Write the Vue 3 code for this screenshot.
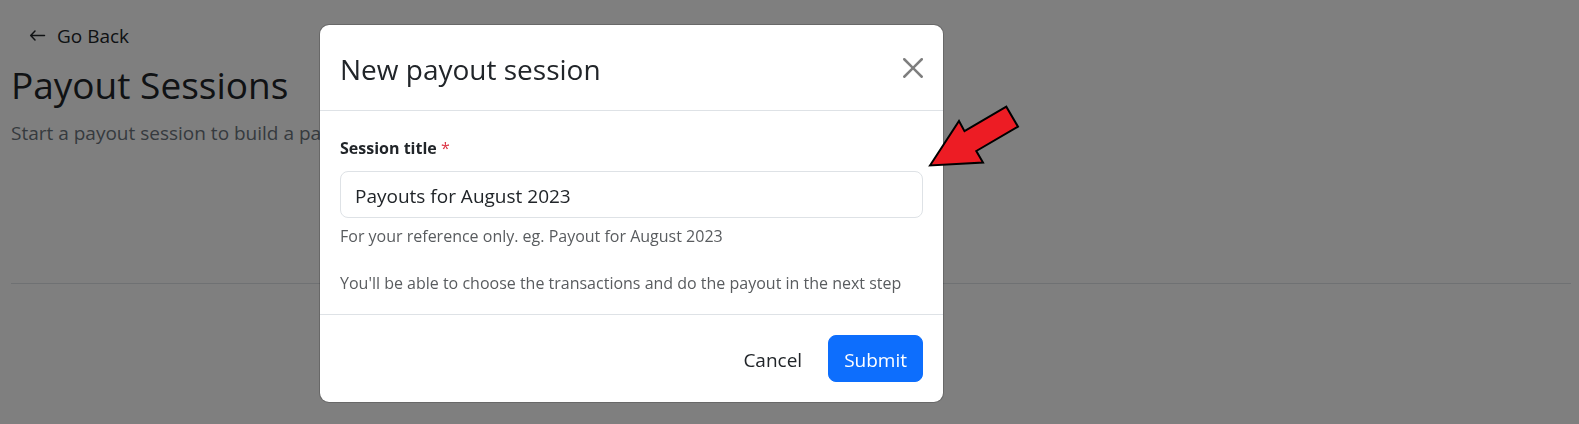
<script setup>
import { ref } from 'vue'

const sessionTitle = ref('Payouts for August 2023')
</script>

<template>
  <main class="page">
    <button type="button" class="back">
      <svg class="back-icon" viewBox="0 0 17 17" aria-hidden="true">
        <path d="M15.500 7.500H2M6 3 1.700 7.500 6 12" />
      </svg>
      Go Back
    </button>
    <h1 class="title">Payout Sessions</h1>
    <p class="lead">Start a payout session to build a payout</p>
    <hr class="rule">
  </main>

  <div class="backdrop">
    <form class="modal" role="dialog" aria-modal="true" aria-labelledby="modal-title" @submit.prevent>
      <header class="modal-header">
        <h2 id="modal-title" class="modal-title">New payout session</h2>
        <button type="button" class="close" aria-label="Close">
          <svg viewBox="0 0 16 16" aria-hidden="true">
            <path d="M.293.293a1 1 0 0 1 1.414 0L8 6.586 14.293.293a1 1 0 1 1 1.414 1.414L9.414 8l6.293 6.293a1 1 0 0 1-1.414 1.414L8 9.414l-6.293 6.293a1 1 0 0 1-1.414-1.414L6.586 8 .293 1.707a1 1 0 0 1 0-1.414z" />
          </svg>
        </button>
      </header>

      <div class="modal-body">
        <label class="label" for="session-title">Session title <span class="required">*</span></label>
        <input id="session-title" v-model="sessionTitle" class="input" type="text" required>
        <p class="help">For your reference only. eg. Payout for August 2023</p>
        <p class="help note">You'll be able to choose the transactions and do the payout in the next step</p>
      </div>

      <footer class="modal-footer">
        <button type="button" class="button">Cancel</button>
        <button type="submit" class="button primary">Submit</button>
      </footer>

      <svg class="pointer" viewBox="0 0 96 68" aria-hidden="true">
        <path d="M4 63.500 33 19l5.500 10.200L80.300 4.700 92 24.700 50.300 49 57 60.500Z" />
      </svg>
    </form>
  </div>
</template>

<style>
body {
  margin: 0;
  background: #fff;
}
</style>

<style scoped>
.page,
.backdrop {
  box-sizing: border-box;
  font-family: "Open Sans", "Noto Sans", sans-serif;
  font-size: 19px;
  line-height: 30px;
  color: #212529;
}

.page {
  padding: 13px 8px 0 11px;
}

.back,
.button {
  box-sizing: border-box;
  padding: 10px 15px 6px;
  border: 1px solid transparent;
  border-radius: 8px;
  background: transparent;
  color: inherit;
  font: inherit;
  line-height: 29px;
}

.back {
  display: flex;
  align-items: center;
  gap: 11px;
  padding: 8px 17px;
  line-height: 28px;
}

.back-icon {
  width: 17px;
  height: 17px;
  fill: none;
  stroke: currentColor;
  stroke-width: 1.5;
  stroke-linecap: round;
  stroke-linejoin: round;
}

.title {
  margin: 2px 0 0;
  font-size: 37px;
  font-weight: 400;
  line-height: 48px;
}

.lead {
  margin: 9px 0 0;
  color: #6c757d;
}

.rule {
  margin: 135px 0 0;
  border: 0;
  border-top: 1px solid #dee2e6;
}

.backdrop {
  position: fixed;
  inset: 0;
  padding: 24px 0 0 319px;
  background: rgba(0, 0, 0, 0.5);
}

.modal {
  position: relative;
  box-sizing: border-box;
  width: 100%;
  max-width: 625px;
  border: 1px solid rgba(0, 0, 0, 0.18);
  border-radius: 10px;
  background: #fff;
  background-clip: padding-box;
}

.modal-header {
  display: flex;
  align-items: center;
  justify-content: space-between;
  padding: 20px;
  border-bottom: 1px solid #dee2e6;
}

.modal-title {
  margin: 0;
  padding-top: 3px;
  font-size: 28px;
  font-weight: 400;
  line-height: 42px;
}

.close {
  display: flex;
  padding: 0;
  border: 0;
  background: transparent;
  opacity: 0.5;
}

.close svg {
  width: 20px;
  height: 20px;
  fill: #000;
}

.modal-body {
  padding: 20px 20px 18px;
}

.label {
  display: block;
  padding-top: 2px;
  margin-bottom: 8px;
  font-size: 16px;
  font-weight: 700;
  line-height: 30px;
}

.required {
  color: #dc3545;
  font-weight: 400;
}

.input {
  display: block;
  box-sizing: border-box;
  width: 100%;
  height: 47px;
  padding: 9px 14px 7px;
  border: 1px solid #dee2e6;
  border-radius: 8px;
  background: #fff;
  color: inherit;
  font: inherit;
  line-height: 29px;
}

.help {
  margin: 5px 0 0;
  color: #595c5f;
  font-size: 16px;
  line-height: 26px;
}

.note {
  margin-top: 21px;
}

.modal-footer {
  display: flex;
  justify-content: flex-end;
  gap: 10px;
  padding: 20px;
  border-top: 1px solid #dee2e6;
}

.primary {
  border-color: #0d6efd;
  background: #0d6efd;
  color: #fff;
}

.pointer {
  position: absolute;
  top: 77px;
  right: -79px;
  width: 96px;
  height: 68px;
  fill: #ed1c24;
  stroke: #000;
  stroke-width: 2;
}
</style>
